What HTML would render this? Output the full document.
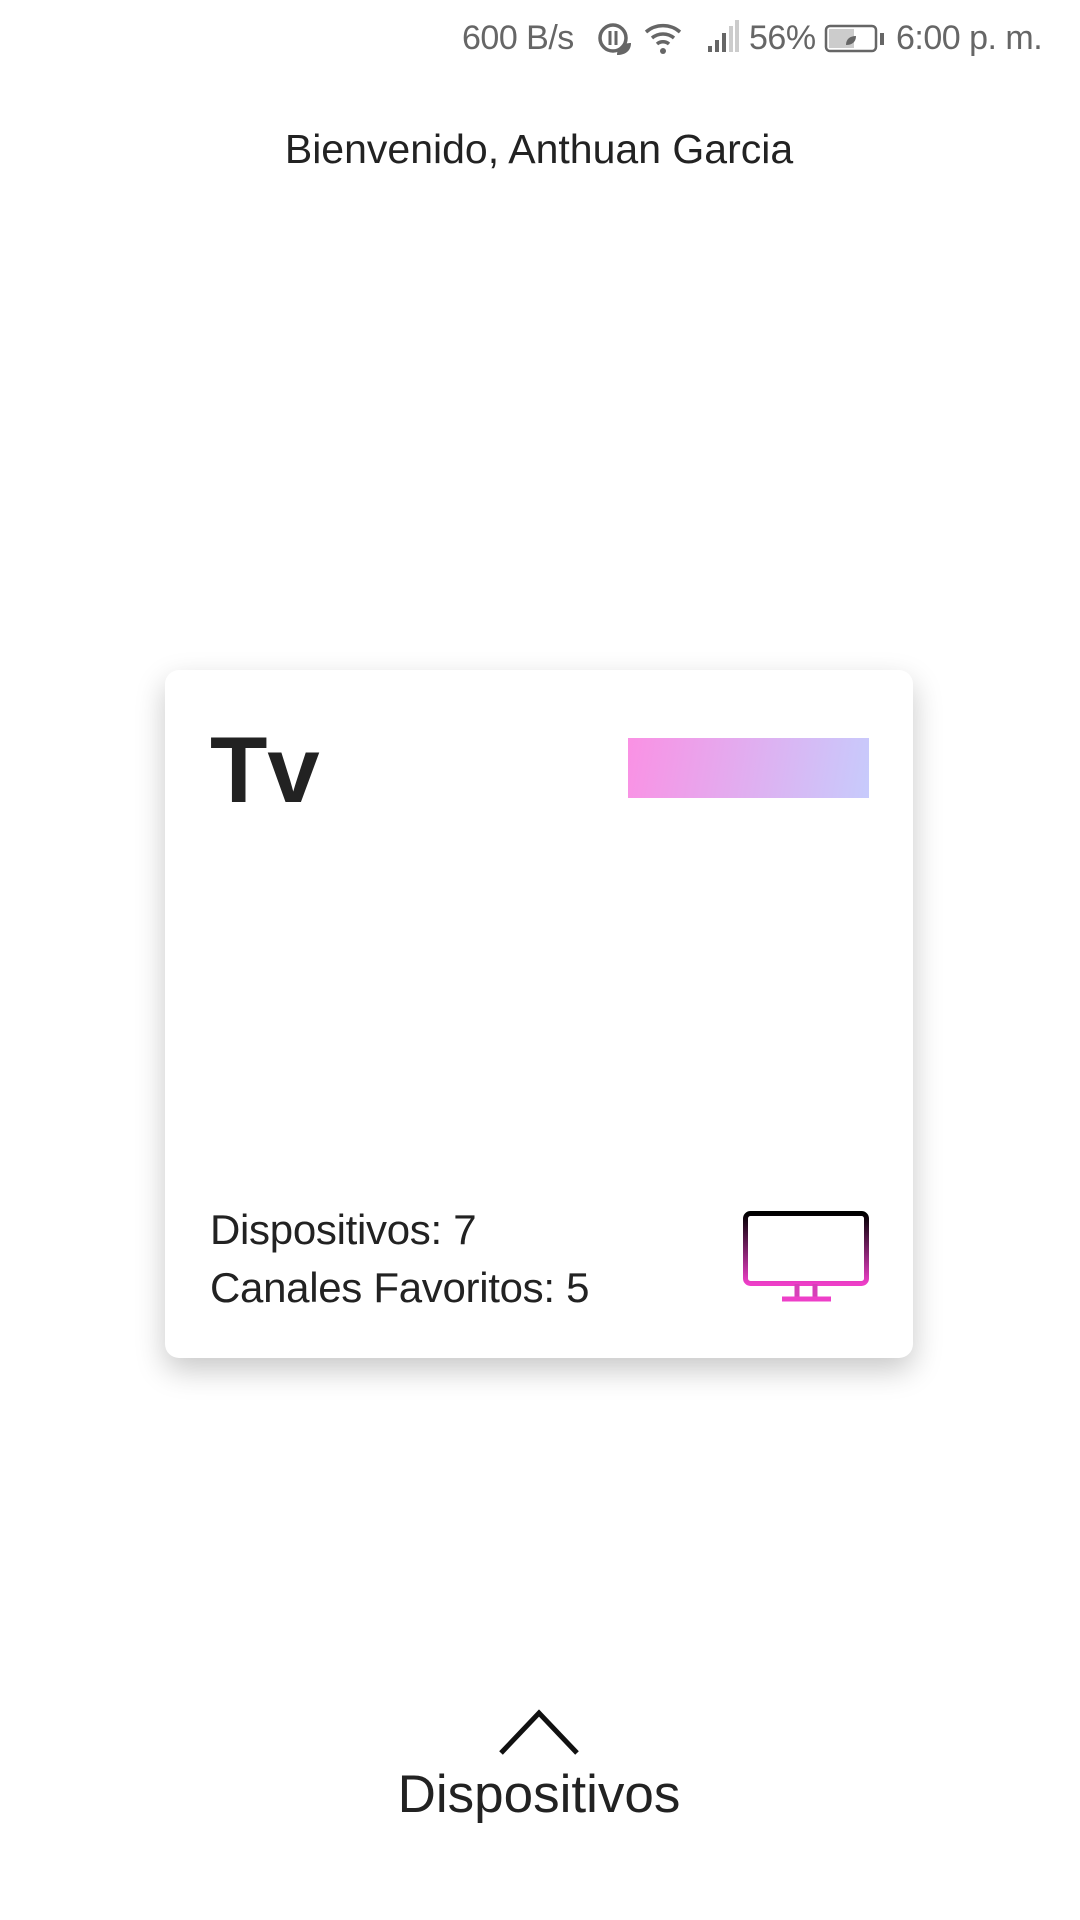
<!DOCTYPE html>
<html><head><meta charset="utf-8"><style>
body{margin:0;width:1080px;height:1920px;background:#fff;font-family:"Liberation Sans",sans-serif;position:relative;overflow:hidden;color:#222}
.abs{position:absolute}
.card{left:165px;top:670px;width:748px;height:688px;background:#fff;border-radius:14px;box-shadow:0 12px 30px rgba(0,0,0,0.22)}
</style></head><body>
<div class="abs" style="left:462px;top:19px;font-size:34px;color:#666;white-space:nowrap;letter-spacing:-0.5px">600 B/s</div>
<svg class="abs" style="left:597px;top:22px" width="40" height="36" viewBox="0 0 40 36"><circle cx="16" cy="16" r="13" fill="none" stroke="#666" stroke-width="3.5"/><path d="M13 9v14M19 9v14" stroke="#666" stroke-width="3"/><path d="M20 33c0-8 6-12 14-12c0 8-6 12-14 12z" fill="#666"/></svg>
<svg class="abs" style="left:643px;top:20px" width="44" height="36" viewBox="0 0 44 36"><path d="M3 12a26 26 0 0 1 34 0M9 18a17 17 0 0 1 22 0M14 24a9 9 0 0 1 12 0" fill="none" stroke="#666" stroke-width="3.5"/><circle cx="20" cy="31" r="3" fill="#666"/></svg>
<svg class="abs" style="left:706px;top:20px" width="36" height="34" viewBox="0 0 36 34"><rect x="2" y="26" width="4" height="6" fill="#666"/><rect x="9" y="20" width="4" height="12" fill="#666"/><rect x="16" y="13" width="4" height="19" fill="#666"/><rect x="23" y="6" width="4" height="26" fill="#ccc"/><rect x="29" y="0" width="4" height="32" fill="#ccc"/></svg>
<div class="abs" style="left:749px;top:19px;font-size:34px;color:#666;letter-spacing:-0.5px">56%</div>
<svg class="abs" style="left:824px;top:24px" width="62" height="30" viewBox="0 0 62 30"><rect x="2" y="2" width="50" height="25" rx="4" fill="none" stroke="#666" stroke-width="2.5"/><rect x="5" y="5" width="25" height="19" fill="#ccc"/><rect x="56" y="9" width="4" height="12" fill="#666"/><path d="M22 21c0-6 4-9 10-9c0 6-4 9-10 9z" fill="#666"/></svg>
<div class="abs" style="left:896px;top:19px;font-size:34px;color:#666;white-space:nowrap;letter-spacing:-0.5px">6:00 p. m.</div>
<div class="abs" style="left:0;width:1078px;text-align:center;top:126px;font-size:41px;color:#222">Bienvenido, Anthuan Garcia</div>
<div class="abs card"></div>
<div class="abs" style="left:210px;top:716px;font-size:94px;font-weight:bold;color:#222">Tv</div>
<div class="abs" style="left:628px;top:738px;width:241px;height:60px;background:linear-gradient(100deg,#fa91e4,#c7cbfc)"></div>
<div class="abs" style="left:210px;top:1201px;font-size:42px;line-height:58px;color:#222;letter-spacing:-0.3px">Dispositivos: 7<br>Canales Favoritos: 5</div>
<svg class="abs" style="left:743px;top:1211px" width="126" height="92" viewBox="0 0 126 92"><defs><linearGradient id="g" x1="0" y1="0" x2="0" y2="1"><stop offset="0" stop-color="#000"/><stop offset="1" stop-color="#ee3fc8"/></linearGradient></defs><rect x="2.5" y="2.5" width="121" height="70" rx="5" fill="none" stroke="url(#g)" stroke-width="5"/><path d="M54 73v14M72 73v14" stroke="#d640b8" stroke-width="5"/><path d="M39 88h49" stroke="#ee3fc8" stroke-width="5"/></svg>
<svg class="abs" style="left:498px;top:1708px" width="82" height="48" viewBox="0 0 82 48"><path d="M3 45L41 5L79 45" fill="none" stroke="#111" stroke-width="5"/></svg>
<div class="abs" style="left:0;width:1078px;text-align:center;top:1764px;font-size:53px;color:#222">Dispositivos</div>
</body></html>
